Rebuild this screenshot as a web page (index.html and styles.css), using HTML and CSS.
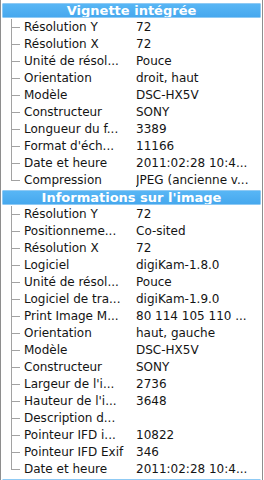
FILE: index.html
```html
<!DOCTYPE html>
<html>
<head>
<meta charset="utf-8">
<link rel="stylesheet" href="styles.css">
</head>
<body>
<div class="panel">
  <div class="section">
    <div class="header"><span class="header-box">Vignette intégrée</span></div>
    <div class="row"><span class="tree"></span><span class="name">Résolution Y</span><span class="value">72</span></div>
    <div class="row"><span class="tree"></span><span class="name">Résolution X</span><span class="value">72</span></div>
    <div class="row"><span class="tree"></span><span class="name">Unité de résol...</span><span class="value">Pouce</span></div>
    <div class="row"><span class="tree"></span><span class="name">Orientation</span><span class="value">droit, haut</span></div>
    <div class="row"><span class="tree"></span><span class="name">Modèle</span><span class="value">DSC-HX5V</span></div>
    <div class="row"><span class="tree"></span><span class="name">Constructeur</span><span class="value">SONY</span></div>
    <div class="row"><span class="tree"></span><span class="name">Longueur du f...</span><span class="value">3389</span></div>
    <div class="row"><span class="tree"></span><span class="name">Format d'éch...</span><span class="value">11166</span></div>
    <div class="row"><span class="tree"></span><span class="name">Date et heure</span><span class="value">2011:02:28 10:4...</span></div>
    <div class="row last"><span class="tree"></span><span class="name">Compression</span><span class="value">JPEG (ancienne v...</span></div>
  </div>
  <div class="section">
    <div class="header"><span class="header-box">Informations sur l'image</span></div>
    <div class="row"><span class="tree"></span><span class="name">Résolution Y</span><span class="value">72</span></div>
    <div class="row"><span class="tree"></span><span class="name">Positionneme...</span><span class="value">Co-sited</span></div>
    <div class="row"><span class="tree"></span><span class="name">Résolution X</span><span class="value">72</span></div>
    <div class="row"><span class="tree"></span><span class="name">Logiciel</span><span class="value">digiKam-1.8.0</span></div>
    <div class="row"><span class="tree"></span><span class="name">Unité de résol...</span><span class="value">Pouce</span></div>
    <div class="row"><span class="tree"></span><span class="name">Logiciel de tra...</span><span class="value">digiKam-1.9.0</span></div>
    <div class="row"><span class="tree"></span><span class="name">Print Image M...</span><span class="value">80 114 105 110 ...</span></div>
    <div class="row"><span class="tree"></span><span class="name">Orientation</span><span class="value">haut, gauche</span></div>
    <div class="row"><span class="tree"></span><span class="name">Modèle</span><span class="value">DSC-HX5V</span></div>
    <div class="row"><span class="tree"></span><span class="name">Constructeur</span><span class="value">SONY</span></div>
    <div class="row"><span class="tree"></span><span class="name">Largeur de l'i...</span><span class="value">2736</span></div>
    <div class="row"><span class="tree"></span><span class="name">Hauteur de l'i...</span><span class="value">3648</span></div>
    <div class="row"><span class="tree"></span><span class="name">Description d...</span><span class="value"></span></div>
    <div class="row"><span class="tree"></span><span class="name">Pointeur IFD i...</span><span class="value">10822</span></div>
    <div class="row"><span class="tree"></span><span class="name">Pointeur IFD Exif</span><span class="value">346</span></div>
    <div class="row last"><span class="tree"></span><span class="name">Date et heure</span><span class="value">2011:02:28 10:4...</span></div>
  </div>
  <div class="section">
    <div class="header"><span class="header-box"></span></div>
  </div>
</div>
</body>
</html>
```
FILE: styles.css
```css
html, body {
  margin: 0;
  padding: 0;
  background: #ffffff;
  overflow: hidden;
}
body {
  width: 264px;
  height: 480px;
  font-family: "DejaVu Sans", sans-serif;
  font-size: 12px;
  color: #141414;
}
.panel {
  box-sizing: border-box;
  width: 263px;
  height: 480px;
  border-left: 1px solid #8e8e8e;
  border-right: 1px solid #8e8e8e;
  padding-top: 2px;
  overflow: hidden;
}
.section {
  display: flex;
  flex-direction: column;
}
.header {
  height: 17px;
  padding: 1px 1px;
  box-sizing: border-box;
  display: flex;
}
.header-box {
  flex: 1;
  box-sizing: border-box;
  height: 15px;
  border: 1px solid #8fcaf4;
  border-radius: 1px;
  background: linear-gradient(#58b6f5, #46a8ee);
  color: #ffffff;
  font-weight: bold;
  font-size: 13px;
  line-height: 13px;
  text-align: center;
  white-space: nowrap;
  overflow: hidden;
}
.row {
  height: 17px;
  line-height: 17px;
  display: flex;
  white-space: nowrap;
}
.tree {
  flex: 0 0 23px;
  background:
    linear-gradient(#a2a2a2, #a2a2a2) 10px 0 / 1px 100% no-repeat,
    linear-gradient(#a2a2a2, #a2a2a2) 10px 8px / 9px 1px no-repeat;
}
.row.last .tree {
  background:
    linear-gradient(#a2a2a2, #a2a2a2) 10px 0 / 1px 9px no-repeat,
    linear-gradient(#a2a2a2, #a2a2a2) 10px 8px / 9px 1px no-repeat;
}
.name {
  flex: 0 0 112px;
  overflow: hidden;
}
.value {
  flex: 1;
  min-width: 0;
  overflow: hidden;
}
```
